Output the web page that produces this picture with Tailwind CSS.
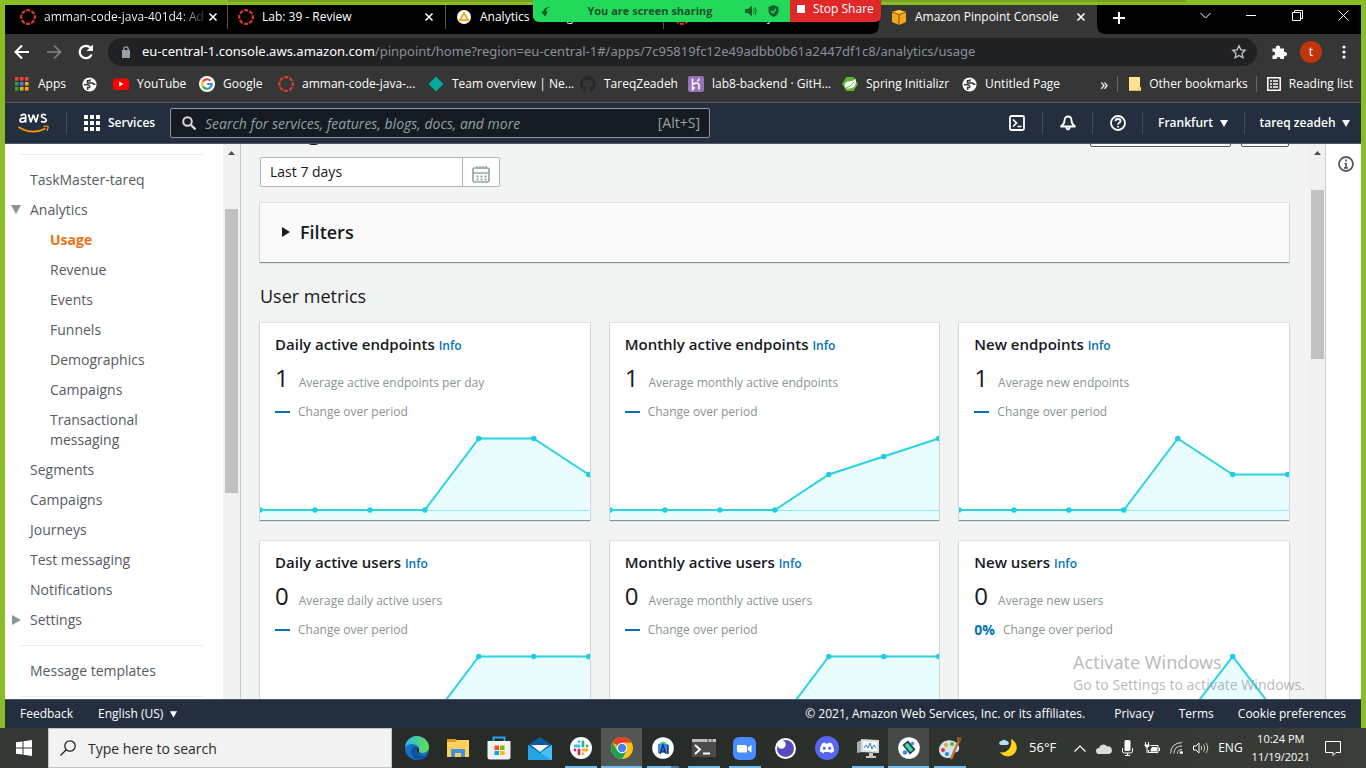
<!DOCTYPE html>
<html lang="en">
<head>
<meta charset="utf-8">
<title>Amazon Pinpoint Console</title>
<script src="https://cdn.jsdelivr.net/npm/@tailwindcss/browser@4"></script>
</head>
<body class="h-screen overflow-hidden flex flex-col bg-[#8abd25] font-['Open_Sans',sans-serif] text-[#16191f]">
<svg class="hidden">
  <symbol id="canvas" viewBox="0 0 16 16"><circle cx="8" cy="8" r="6.8" fill="none" stroke="#e03a2e" stroke-width="2.2" stroke-dasharray="4.1 1.24" stroke-dashoffset="2"/></symbol>
  <symbol id="x" viewBox="0 0 10 10"><path d="M1.500 1.500l7 7M8.500 1.500l-7 7" stroke="#fff" stroke-width="1.600"/></symbol>
  <symbol id="globe" viewBox="0 0 16 16"><circle cx="8" cy="8" r="7.500" fill="#fff"/><path d="M2 8.300h4.200q2 0 2 1.600v1.300H6v2.600" fill="none" stroke="#363636" stroke-width="1.500"/><path d="M8.500 2.300v1.600H5.800v2.500h5.500q1 0 1 1.200h2" fill="none" stroke="#363636" stroke-width="1.600"/></symbol>
  <symbol id="down" viewBox="0 0 10 8"><path d="M1 1h8L5 8z" fill="currentColor"/></symbol>
</svg>

<div class="relative flex-1 min-h-0 flex flex-col px-[5px] pt-[5px]">
  <div class="absolute top-0 left-[228px] right-[180px] h-[2px] bg-[#76a222]"></div>

  <div class="absolute z-10 top-0 left-[533px] w-[348px] h-[22px] flex rounded-b-md overflow-hidden text-xs shadow">
    <div class="w-[257px] bg-[#23d959] flex items-center px-[7px]">
      <svg class="size-[11px]" viewBox="0 0 11 11"><path d="M10 1C6 1 3.500 2.500 3.500 5.500H1l4 5 3-5H6C6 3.500 7 2 10 1z" fill="#075f22"/></svg>
      <span class="flex-1 text-center text-[11px] font-bold text-[#1c5130] pl-1">You are screen sharing</span>
      <svg class="w-[12px] h-[12px] mr-[11px]" viewBox="0 0 12 12"><path d="M0 4h3l4-3.500v11L3 8H0z" fill="#12622c"/><path d="M8.500 3.500q1.500 2.500 0 5M10 2q2.600 4 0 8" fill="none" stroke="#12622c"/></svg>
      <svg class="w-[11px] h-[12px] mr-1" viewBox="0 0 11 12"><path d="M5.500 0l5 2v4q0 4-5 6-5-2-5-6V2z" fill="#12622c"/><path d="M3 6l2 2 3-4" fill="none" stroke="#23d959" stroke-width="1.300"/></svg>
    </div>
    <button class="flex-1 bg-[#e02828] text-white flex items-center gap-2 pl-[7px] pb-1"><span class="size-2 bg-white"></span>Stop Share</button>
  </div>

  <div class="flex bg-[#363636] h-[29px] shrink-0 text-xs text-white">
    <div class="flex w-[874px] bg-black rounded-br-lg pl-[5px]">
      <div class="w-[218px] h-6 flex items-center border-r border-[#555] pl-[10px] pr-[11px] gap-2"><svg class="size-4 shrink-0"><use href="#canvas"/></svg><span class="flex-1 whitespace-nowrap bg-linear-to-r from-white from-85% to-[#333] bg-clip-text text-transparent">amman-code-java-401d4: Ad</span><button aria-label="Close tab" class="flex -ml-1"><svg class="size-[10px]"><use href="#x"/></svg></button></div>
      <div class="w-[218px] h-6 flex items-center border-r border-[#555] pl-[10px] pr-[11px] gap-2"><svg class="size-4 shrink-0"><use href="#canvas"/></svg><span class="flex-1 whitespace-nowrap">Lab: 39 - Review</span><button aria-label="Close tab" class="flex"><svg class="size-[10px]"><use href="#x"/></svg></button></div>
      <div class="w-[218px] h-6 flex items-center border-r border-[#555] pl-[10px] pr-[11px] gap-2"><svg class="size-4 shrink-0" viewBox="0 0 16 16"><circle cx="8" cy="8" r="7" fill="#fff"/><path d="M8 4l4 7H4z" fill="none" stroke="#f5a81c" stroke-width="1.800"/></svg><span class="flex-1 whitespace-nowrap">Analytics - Billing</span></div>
      <div class="flex-1 h-6 flex items-center pl-[10px] gap-2"><svg class="size-4 shrink-0"><use href="#canvas"/></svg><span class="whitespace-nowrap">Lab: 39 - Project</span></div>
    </div>
    <div class="w-[218px] h-6 flex items-center pl-[12px] pr-[11px] gap-2">
      <svg class="size-4 shrink-0" viewBox="0 0 16 16"><path d="M8 1l7 2v10l-7 3-7-3V3z" fill="#f3a61f"/><path d="M1 3l7 2.500L15 3 8 1z" fill="#ffc62e"/><path d="M8 5.500V16M1 3l7 2.500L15 3" stroke="#8c5607" fill="none"/></svg>
      <span class="flex-1 whitespace-nowrap">Amazon Pinpoint Console</span><button aria-label="Close tab" class="flex"><svg class="size-[10px]"><use href="#x"/></svg></button>
    </div>
    <div class="flex-1 bg-black rounded-bl-lg flex items-center pb-1 pl-4">
      <button aria-label="New tab"><svg class="size-3" viewBox="0 0 12 12"><path d="M6 0v12M0 6h12" stroke="#fff" stroke-width="2"/></svg></button>
      <div class="ml-auto flex gap-[35px] pr-[12px] pb-1">
        <button aria-label="Search tabs"><svg class="size-[11px]" viewBox="0 0 11 11"><path d="M.5 3l5 5 5-5" stroke="#fff" fill="none"/></svg></button>
        <button aria-label="Minimize"><svg class="size-[11px]" viewBox="0 0 11 11"><path d="M0 5.500h10" stroke="#fff"/></svg></button>
        <button aria-label="Restore"><svg class="size-[11px]" viewBox="0 0 11 11"><path d="M.5 2.500h8v8h-8zM2.500 2.500v-2h8v8h-2" stroke="#fff" fill="none"/></svg></button>
        <button aria-label="Close"><svg class="size-[11px]" viewBox="0 0 11 11"><path d="M.5.5l10 10M10.500.5l-10 10" stroke="#fff"/></svg></button>
      </div>
    </div>
  </div>

  <div class="h-9 shrink-0 bg-[#363636] flex items-center text-white pl-[9px] pr-[15px]">
    <button aria-label="Back"><svg class="size-4" viewBox="0 0 16 16"><path d="M15 8H2M8 1.500L1.500 8 8 14.500" stroke="#fff" stroke-width="2" fill="none"/></svg></button>
    <button aria-label="Forward" class="ml-4"><svg class="size-4" viewBox="0 0 16 16"><path d="M1 8h13M8 1.500L14.500 8 8 14.500" stroke="#858585" stroke-width="1.700" fill="none"/></svg></button>
    <button aria-label="Reload" class="ml-4"><svg class="size-4" viewBox="0 0 16 16"><path d="M13.600 10.500A6.200 6.200 0 1 1 12.500 3.800" stroke="#fff" stroke-width="2.200" fill="none"/><path d="M15 .5v6.500H8.500z" fill="#fff"/></svg></button>
    <div class="ml-[14px] flex-1 h-7 rounded-full bg-[#202124] flex items-center pl-[14px] pr-[10px]">
      <svg class="w-2 h-3" viewBox="0 0 8 12"><path d="M0 4h8v8H0z" fill="#9aa0a6"/><path d="M1.800 5V3a2.200 2.200 0 0 1 4.400 0v2" stroke="#9aa0a6" stroke-width="1.300" fill="none"/></svg>
      <span class="ml-3 flex-1 whitespace-nowrap text-[13px] font-['Noto_Sans',sans-serif] text-[#8b9095]"><span class="text-white">eu-central-1.console.aws.amazon.com</span>/pinpoint/home?region=eu-central-1#/apps/7c95819fc12e49adbb0b61a2447df1c8/analytics/usage</span>
      <svg class="size-4" viewBox="0 0 16 16"><path d="M8 1.800l1.900 4 4.400.5-3.300 3 .9 4.400L8 11.500l-3.900 2.200.9-4.400-3.300-3 4.400-.5z" stroke="#c5c8cb" stroke-width="1.300" fill="none"/></svg>
    </div>
    <button aria-label="Extensions" class="ml-[14px]"><svg class="size-4" viewBox="0 0 16 16"><path d="M1.500 4.500h3.500a2.200 2.200 0 1 1 4 0h4v3.500a2.200 2.200 0 1 1 0 4v3H9.500a2 2 0 1 0-4 0h-4v-3.500a2 2 0 1 0 0-3.800z" fill="#fff"/></svg></button>
    <button aria-label="Profile" class="ml-[13px] size-[22px] rounded-full bg-[#c0350c] text-xs leading-[22px]">t</button>
    <button aria-label="Menu" class="ml-[20px]"><svg class="w-1 h-[14px]" viewBox="0 0 4 14"><circle cx="2" cy="2" r="1.600" fill="#fff"/><circle cx="2" cy="7" r="1.600" fill="#fff"/><circle cx="2" cy="12" r="1.600" fill="#fff"/></svg></button>
  </div>

  <nav class="h-[33px] shrink-0 bg-[#363636] border-b border-[#5c5c5c] flex items-center text-white text-xs pl-[10px] pr-2 whitespace-nowrap pb-1">
    <a href="#" class="w-[67px] flex items-center gap-[9px]"><svg class="size-[14px]" viewBox="0 0 14 14"><path d="M0 0h3.500v3.500H0zM5 0h3.500v3.500H5zM10 0h3.500v3.500H10z" fill="#e94335"/><path d="M0 5h3.500v3.500H0zM0 10h3.500v3.500H0z" fill="#2da34f"/><path d="M5 5h3.500v3.500H5z" fill="#3b82f6"/><path d="M5 10h3.500v3.500H5zM10 5h3.500v3.500H10zM10 10h3.500v3.500H10z" fill="#f9ab10"/></svg>Apps</a>
    <a href="#" aria-label="Bookmark" class="w-[31px]"><svg class="size-[15px]"><use href="#globe"/></svg></a>
    <a href="#" class="w-[86px] flex items-center gap-2"><svg class="size-4" viewBox="0 0 16 16"><rect y="2.500" width="16" height="11.500" rx="2.500" fill="#f00"/><path d="M6.300 5.500v5l4.200-2.500z" fill="#fff"/></svg>YouTube</a>
    <a href="#" class="w-[79px] flex items-center gap-2"><svg class="size-4" viewBox="0 0 16 16"><circle cx="8" cy="8" r="8" fill="#fff"/><g fill="none" stroke-width="2.200"><path d="M11.400 4.700A4.800 4.800 0 0 0 3.800 5.700" stroke="#ea4335"/><path d="M3.800 5.700a4.800 4.800 0 0 0 0 4.600" stroke="#fbbc05"/><path d="M3.800 10.300a4.800 4.800 0 0 0 7.300 1.300" stroke="#34a853"/><path d="M11.100 11.600A4.800 4.800 0 0 0 12.800 8H8.200" stroke="#4285f4"/></g></svg>Google</a>
    <a href="#" class="w-[150px] flex items-center gap-2"><svg class="size-4"><use href="#canvas"/></svg>amman-code-java-...</a>
    <a href="#" class="w-[152px] flex items-center gap-2"><svg class="size-4 shrink-0" viewBox="0 0 16 16"><path d="M8 .5L15.500 8 8 15.500.5 8z" fill="#00a99d"/></svg>Team overview | Ne...</a>
    <a href="#" class="w-[108px] flex items-center gap-2"><svg class="size-4" viewBox="0 0 16 16"><path d="M8 0a8 8 0 0 0-2.500 15.600c.4 0 .5-.2.500-.4v-1.500c-2.200.5-2.700-1-2.700-1-.4-.9-.9-1.200-.9-1.200-.7-.5.1-.5.1-.5.800.1 1.200.8 1.200.8.700 1.300 1.900.9 2.300.7.100-.5.300-.9.500-1.100-1.800-.2-3.600-.9-3.600-4 0-.9.300-1.600.8-2.100-.1-.2-.4-1 .1-2.100 0 0 .7-.2 2.200.8a7.500 7.500 0 0 1 4 0c1.500-1 2.200-.8 2.200-.8.500 1.100.2 1.900.1 2.100.5.500.8 1.200.8 2.100 0 3.100-1.800 3.700-3.600 4 .3.200.6.700.6 1.500v2.200c0 .2.100.5.500.4A8 8 0 0 0 8 0z" fill="#24292e"/></svg>TareqZeadeh</a>
    <a href="#" class="w-[154px] flex items-center gap-2"><svg class="size-4" viewBox="0 0 16 16"><rect width="16" height="16" rx="2" fill="#9673b9"/><path d="M4.500 2.500v6Q11 5.500 11 9v4.500M11 2.500q0 1.500-1.500 3M4.500 10.500v3l1.700-1.500z" stroke="#fff" stroke-width="1.500" fill="none"/></svg>lab8-backend · GitH...</a>
    <a href="#" class="w-[120px] flex items-center gap-2"><svg class="size-4" viewBox="0 0 16 16"><path d="M4.500 1h7L16 8l-4.500 7h-7L0 8z" fill="#5fb832"/><path d="M13.500 2.500C15 9 12 13 7 12.500c-2 0-3.500-.5-4-1C2 6 5 5.500 9 5c2-.3 3.500-1 4.500-2.500z" fill="#fff"/><path d="M3.500 12Q9 11 12 6" stroke="#5fb832" fill="none"/></svg>Spring Initializr</a>
    <a href="#" class="flex items-center gap-2"><svg class="size-[15px]"><use href="#globe"/></svg>Untitled Page</a>
    <button class="ml-auto text-base leading-4 pr-[9px]">»</button>
    <a href="#" class="flex items-center gap-2 border-l border-[#666] pl-[11px] pr-2"><svg class="w-3 h-[14px]" viewBox="0 0 12 14"><path d="M0 0h11v10h1v4H0z" fill="#ffe391"/><path d="M0 13.500h12M10 10v3" stroke="#e6b84a"/></svg>Other bookmarks</a>
    <a href="#" class="flex items-center gap-2 border-l border-[#666] pl-[10px]"><svg class="size-[14px]" viewBox="0 0 14 14"><path d="M.8.8h12.400v12.400H.8z" fill="none" stroke="#fff" stroke-width="1.500"/><path d="M3 4h2M6 4h5M3 7h2M6 7h5M3 10h2M6 10h5" stroke="#fff" stroke-width="1.500"/></svg>Reading list</a>
  </nav>

  <header class="h-10 shrink-0 bg-[#232f3e] flex items-center text-white text-xs font-semibold">
    <a href="#" aria-label="AWS" class="ml-[13px]"><svg class="w-[31px] h-5" viewBox="0 0 31 20"><g fill="none" stroke="#fff" stroke-width="1.700"><path d="M2.500 2.700Q7.700-.2 7.700 3.500V9.500M7.700 5.200Q2 4.500 2 7.300 2 9 4 9q3 0 3.700-2.600"/><path d="M10.500 1.200l2.300 8 2.600-7.400 2.600 7.400 2.300-8" stroke-linejoin="bevel"/><path d="M28 2Q23.500.5 23.500 3.200c0 2.200 4.800 1.300 4.800 3.800 0 2.600-4 2.200-5.300 1.300"/></g><path d="M.5 14q13.500 8.500 27 1.500" fill="none" stroke="#f90" stroke-width="1.800"/><path d="M25.500 13.500q4-1 4.500 0t-1 4.200" fill="none" stroke="#f90" stroke-width="1.300"/></svg></a>
    <span class="ml-[17px] w-px h-[22px] bg-[#414c5a]"></span>
    <button class="ml-[17px] w-[70px] flex items-center gap-2"><svg class="size-4 shrink-0" viewBox="0 0 16 16"><path d="M0 0h4v4H0zM6 0h4v4H6zM12 0h4v4h-4zM0 6h4v4H0zM6 6h4v4H6zM12 6h4v4h-4zM0 12h4v4H0zM6 12h4v4H6zM12 12h4v4h-4z" fill="#fff"/></svg>Services</button>
    <label class="ml-4 w-[540px] h-[30px] rounded-[2px] border border-[#8d99a5] bg-[#161a22] flex items-center pl-[11px] pr-[9px] text-sm font-normal text-[#95a5a6]">
      <svg class="size-[14px] shrink-0" viewBox="0 0 14 14"><circle cx="5.500" cy="5.500" r="4.300" fill="none" stroke="#d5dbdb" stroke-width="2"/><path d="M9 9l4.500 4.500" stroke="#d5dbdb" stroke-width="2.300"/></svg>
      <input type="text" aria-label="Search" placeholder="Search for services, features, blogs, docs, and more" class="pl-[9px] h-full flex-1 min-w-0 bg-transparent italic placeholder:text-[#8fa3a5] outline-none"><span>[Alt+S]</span>
    </label>
    <div class="ml-auto flex items-center h-[22px]">
      <button aria-label="CloudShell" class="w-[50px] flex justify-center"><svg class="size-4" viewBox="0 0 16 16"><rect x="1" y="1" width="14" height="14" rx="1.500" fill="none" stroke="#fff" stroke-width="1.800"/><path d="M4 4.500l3.500 3.500L4 11.500M8.500 11.500h4" fill="none" stroke="#fff" stroke-width="1.700"/></svg></button>
      <button aria-label="Notifications" class="w-[50px] flex items-center justify-center h-full border-l border-[#414c5a]"><svg class="size-4" viewBox="0 0 16 16"><path d="M1 11.500Q4.500 9 4.500 5.500C4.500 3 6 1.500 8 1.500S11.500 3 11.500 5.500q0 3.500 3.500 6zM6.300 12q.2 2.500 1.700 2.500T9.700 12" fill="none" stroke="#fff" stroke-width="1.800" stroke-linejoin="round"/></svg></button>
      <button aria-label="Help" class="w-[50px] flex items-center justify-center h-full border-l border-[#414c5a]"><svg class="size-4" viewBox="0 0 16 16"><circle cx="8" cy="8" r="7" fill="none" stroke="#fff" stroke-width="1.800"/><path d="M5.500 6.300Q5.500 4 8 4t2.500 2q0 1-1.300 1.800Q8 8.500 8 9.800M8 11v1.600" fill="none" stroke="#fff" stroke-width="1.800"/></svg></button>
      <button class="w-[102px] h-full border-l border-[#414c5a] flex items-center justify-center gap-[6px]">Frankfurt<svg class="w-[10px] h-[8px]"><use href="#down"/></svg></button>
      <button class="w-[117px] pl-1 h-full border-l border-[#414c5a] flex items-center justify-center gap-[5px]">tareq zeadeh<svg class="w-[10px] h-[8px]"><use href="#down"/></svg></button>
    </div>
  </header>

  <div class="flex-1 min-h-0 flex bg-white border-t border-[#4b5766] overflow-hidden">
    <aside class="w-[218px] shrink-0 overflow-hidden text-sm leading-5 text-[#545b64] pt-[10px]">
      <ul class="mx-[15px] mr-5 border-t border-[#eaeded] pt-[15px] pl-[10px] pb-[15px] space-y-[10px]">
        <li><a href="#">TaskMaster-tareq</a></li>
        <li class="relative"><svg class="absolute -left-[20px] top-[5px] w-[12px] h-[9px] text-[#879596]" viewBox="0 0 12 9"><path d="M1 0h10L6 9z" fill="currentColor"/></svg><a href="#">Analytics</a>
          <ul class="pl-5 pt-[10px] space-y-[10px]">
            <li><a href="#" class="font-bold text-[#ec7211]">Usage</a></li><li><a href="#">Revenue</a></li><li><a href="#">Events</a></li><li><a href="#">Funnels</a></li><li><a href="#">Demographics</a></li><li><a href="#">Campaigns</a></li><li><a href="#">Transactional<br>messaging</a></li>
          </ul></li>
        <li><a href="#">Segments</a></li><li><a href="#">Campaigns</a></li><li><a href="#">Journeys</a></li><li><a href="#">Test messaging</a></li><li><a href="#">Notifications</a></li>
        <li class="relative"><svg class="absolute -left-[18px] top-[5px] w-[9px] h-[10px]" viewBox="0 0 9 10"><path d="M0 0l9 5-9 5z" fill="#879596"/></svg><a href="#">Settings</a></li>
      </ul>
      <div class="mx-[15px] mr-5 border-y border-[#eaeded] py-[15px] pl-[10px]"><a href="#">Message templates</a></div>
    </aside>
    <div class="w-[17px] shrink-0 bg-[#f1f1f1] flex flex-col items-center"><svg class="mt-[7px] w-[7px] h-1" viewBox="0 0 7 4"><path d="M0 4l3.500-4L7 4z" fill="#505050"/></svg><div class="mt-[54px] w-[13px] h-[284px] bg-[#c1c1c1]"></div></div>

    <main class="flex-1 min-w-0 border-l border-[#c8ccce] bg-[#f2f3f3] overflow-hidden px-[19px] pr-[21px]">
      <div class="-mt-[28px] h-[31px] flex items-end justify-between">
        <h1 class="text-[26px] leading-[36px] font-semibold">Usage</h1>
        <div class="flex gap-[10px]"><button aria-label="Export" class="w-[141px] h-7 rounded-[2px] border border-[#545b64] bg-white"></button><button aria-label="Settings" class="w-12 h-7 rounded-[2px] border border-[#545b64] bg-white"></button></div>
      </div>
      <div class="mt-[10px] flex w-[240px] h-[30px] bg-white border border-[#aab7b8] rounded-[2px]"><input aria-label="Date range" value="Last 7 days" class="flex-1 min-w-0 px-[9px] text-sm outline-none"><button aria-label="Pick dates" class="w-[37px] border-l border-[#aab7b8] flex items-center justify-center pt-1"><svg class="w-[18px] h-[17px]" viewBox="0 0 18 17"><rect x="1" y="2" width="16" height="14" rx="1.500" fill="none" stroke="#95a5a6" stroke-width="1.700"/><path d="M1 7h16M5 0v3M8 0v3M11 0v3M14 0v3" stroke="#95a5a6" stroke-width="1.500"/><path d="M4.500 10.500h10M4.500 13.500h10" stroke="#95a5a6" stroke-width="1.800" stroke-dasharray="2 2"/></svg></button></div>
      <button class="mt-4 w-full h-[59px] bg-[#fafafa] shadow-[0_1px_1px_#879596,0_0_0_1px_#dfe3e3] flex items-center gap-[10px] pl-[22px] text-lg font-semibold pb-[2px]"><svg class="w-2 h-[10px]" viewBox="0 0 8 10"><path d="M0 0l8 5-8 5z" fill="#16191f"/></svg>Filters</button>
      <h2 class="mt-[22px] text-lg leading-6">User metrics</h2>
      <div class="mt-[15px] grid grid-cols-3 gap-x-[20px] gap-y-[21px]">

        <section class="h-[197px] bg-white shadow-[0_1px_1px_#879596,0_0_0_1px_#dfe3e3] flex flex-col">
          <div class="px-[15px] pt-[11px]">
            <h3 class="text-[15px] leading-5 font-semibold">Daily active endpoints <a href="#" class="text-xs font-semibold text-[#0073bb]">Info</a></h3>
            <p class="mt-[8px] h-8 leading-8 text-xs text-[#879596]"><span class="text-2xl leading-8 text-[#16191f] mr-[10px]">1</span>Average active endpoints per day</p>
            <p class="mt-[10px] h-4 flex items-center gap-2 text-xs text-[#879596]"><span class="w-[15px] h-[2px] bg-[#0073bb]"></span>Change over period</p>
          </div>
          <svg class="mt-auto w-full h-[90px]" viewBox="0 0 330 90" preserveAspectRatio="none"><path d="M0 80H165L219 8.500H274L330 44.500V90H0z" fill="#e9fcfe"/><path d="M0 80.500H330" stroke="#8de8ef"/><path d="M0 80H165L219 8.500H274L329 44.500" fill="none" stroke="#29d3e2" stroke-width="2"/><path d="M0 80h0M55 80h0M110 80h0M165 80h0M219 8.500h0M274 8.500h0M329 44.500h0" stroke="#1fcfe0" stroke-width="5.500" stroke-linecap="round"/></svg>
        </section>

        <section class="h-[197px] bg-white shadow-[0_1px_1px_#879596,0_0_0_1px_#dfe3e3] flex flex-col">
          <div class="px-[15px] pt-[11px]">
            <h3 class="text-[15px] leading-5 font-semibold">Monthly active endpoints <a href="#" class="text-xs font-semibold text-[#0073bb]">Info</a></h3>
            <p class="mt-[8px] h-8 leading-8 text-xs text-[#879596]"><span class="text-2xl leading-8 text-[#16191f] mr-[10px]">1</span>Average monthly active endpoints</p>
            <p class="mt-[10px] h-4 flex items-center gap-2 text-xs text-[#879596]"><span class="w-[15px] h-[2px] bg-[#0073bb]"></span>Change over period</p>
          </div>
          <svg class="mt-auto w-full h-[90px]" viewBox="0 0 330 90" preserveAspectRatio="none"><path d="M0 80H165L219 44.500L274 26.500L330 8.500V90H0z" fill="#e9fcfe"/><path d="M0 80.500H330" stroke="#8de8ef"/><path d="M0 80H165L219 44.500L274 26.500L329 8.500" fill="none" stroke="#29d3e2" stroke-width="2"/><path d="M0 80h0M55 80h0M110 80h0M165 80h0M219 44.500h0M274 26.500h0M329 8.500h0" stroke="#1fcfe0" stroke-width="5.500" stroke-linecap="round"/></svg>
        </section>

        <section class="h-[197px] bg-white shadow-[0_1px_1px_#879596,0_0_0_1px_#dfe3e3] flex flex-col">
          <div class="px-[15px] pt-[11px]">
            <h3 class="text-[15px] leading-5 font-semibold">New endpoints <a href="#" class="text-xs font-semibold text-[#0073bb]">Info</a></h3>
            <p class="mt-[8px] h-8 leading-8 text-xs text-[#879596]"><span class="text-2xl leading-8 text-[#16191f] mr-[10px]">1</span>Average new endpoints</p>
            <p class="mt-[10px] h-4 flex items-center gap-2 text-xs text-[#879596]"><span class="w-[15px] h-[2px] bg-[#0073bb]"></span>Change over period</p>
          </div>
          <svg class="mt-auto w-full h-[90px]" viewBox="0 0 330 90" preserveAspectRatio="none"><path d="M0 80H165L219 8.500L274 44.500H330V90H0z" fill="#e9fcfe"/><path d="M0 80.500H330" stroke="#8de8ef"/><path d="M0 80H165L219 8.500L274 44.500H329" fill="none" stroke="#29d3e2" stroke-width="2"/><path d="M0 80h0M55 80h0M110 80h0M165 80h0M219 8.500h0M274 44.500h0M329 44.500h0" stroke="#1fcfe0" stroke-width="5.500" stroke-linecap="round"/></svg>
        </section>

        <section class="h-[197px] bg-white shadow-[0_1px_1px_#879596,0_0_0_1px_#dfe3e3] flex flex-col">
          <div class="px-[15px] pt-[11px]">
            <h3 class="text-[15px] leading-5 font-semibold">Daily active users <a href="#" class="text-xs font-semibold text-[#0073bb]">Info</a></h3>
            <p class="mt-[8px] h-8 leading-8 text-xs text-[#879596]"><span class="text-2xl leading-8 text-[#16191f] mr-[10px]">0</span>Average daily active users</p>
            <p class="mt-[10px] h-4 flex items-center gap-2 text-xs text-[#879596]"><span class="w-[15px] h-[2px] bg-[#0073bb]"></span>Change over period</p>
          </div>
          <svg class="mt-auto w-full h-[90px]" viewBox="0 0 330 90" preserveAspectRatio="none"><path d="M0 80H165L219 8.500H330V90H0z" fill="#e9fcfe"/><path d="M0 80H165L219 8.500H329" fill="none" stroke="#29d3e2" stroke-width="2"/><path d="M165 80h0M219 8.500h0M274 8.500h0M329 8.500h0" stroke="#1fcfe0" stroke-width="5.500" stroke-linecap="round"/></svg>
        </section>

        <section class="h-[197px] bg-white shadow-[0_1px_1px_#879596,0_0_0_1px_#dfe3e3] flex flex-col">
          <div class="px-[15px] pt-[11px]">
            <h3 class="text-[15px] leading-5 font-semibold">Monthly active users <a href="#" class="text-xs font-semibold text-[#0073bb]">Info</a></h3>
            <p class="mt-[8px] h-8 leading-8 text-xs text-[#879596]"><span class="text-2xl leading-8 text-[#16191f] mr-[10px]">0</span>Average monthly active users</p>
            <p class="mt-[10px] h-4 flex items-center gap-2 text-xs text-[#879596]"><span class="w-[15px] h-[2px] bg-[#0073bb]"></span>Change over period</p>
          </div>
          <svg class="mt-auto w-full h-[90px]" viewBox="0 0 330 90" preserveAspectRatio="none"><path d="M0 80H165L219 8.500H330V90H0z" fill="#e9fcfe"/><path d="M0 80H165L219 8.500H329" fill="none" stroke="#29d3e2" stroke-width="2"/><path d="M165 80h0M219 8.500h0M274 8.500h0M329 8.500h0" stroke="#1fcfe0" stroke-width="5.500" stroke-linecap="round"/></svg>
        </section>

        <section class="h-[197px] bg-white shadow-[0_1px_1px_#879596,0_0_0_1px_#dfe3e3] flex flex-col">
          <div class="px-[15px] pt-[11px]">
            <h3 class="text-[15px] leading-5 font-semibold">New users <a href="#" class="text-xs font-semibold text-[#0073bb]">Info</a></h3>
            <p class="mt-[8px] h-8 leading-8 text-xs text-[#879596]"><span class="text-2xl leading-8 text-[#16191f] mr-[10px]">0</span>Average new users</p>
            <p class="mt-[10px] h-4 flex items-center gap-2 text-xs text-[#879596]"><span class="text-sm font-bold text-[#0073bb]">0%</span>Change over period</p>
          </div>
          <svg class="mt-auto w-full h-[90px]" viewBox="0 0 330 90" preserveAspectRatio="none"><path d="M0 80H219L274 8.500L329 80V90H0z" fill="#e9fcfe"/><path d="M0 80H219L274 8.500L329 80" fill="none" stroke="#29d3e2" stroke-width="2"/><path d="M219 80h0M274 8.500h0M329 80h0" stroke="#1fcfe0" stroke-width="5.500" stroke-linecap="round"/></svg>
        </section>
      </div>
    </main>
    <div class="w-[15px] shrink-0 bg-[#f1f1f1] flex flex-col items-center"><svg class="mt-[7px] w-[7px] h-1" viewBox="0 0 7 4"><path d="M0 4l3.500-4L7 4z" fill="#505050"/></svg><div class="mt-[35px] w-[13px] h-[169px] bg-[#c1c1c1]"></div></div>
    <div class="w-9 shrink-0 border-l border-[#c8ccce] flex justify-center pt-[12px] pl-[5px]"><button aria-label="Info panel" class="size-4"><svg class="size-4" viewBox="0 0 16 16"><circle cx="8" cy="8" r="7" fill="none" stroke="#545b64" stroke-width="1.800"/><path d="M8 3.500v2M6.500 7.500H8v4M6 11.800h4" fill="none" stroke="#545b64" stroke-width="1.700"/></svg></button></div>
  </div>

  <footer class="h-[29px] shrink-0 bg-[#232f3e] border-t border-[#4b5766] text-white text-xs font-medium flex items-center px-[15px]">
    <a href="#">Feedback</a><button class="ml-[25px] flex items-center gap-[6px]">English (US)<svg class="w-[9px] h-[8px]"><use href="#down"/></svg></button>
    <span class="ml-auto">© 2021, Amazon Web Services, Inc. or its affiliates.</span><a href="#" class="ml-[29px]">Privacy</a><a href="#" class="ml-[25px]">Terms</a><a href="#" class="ml-[24px]">Cookie preferences</a>
  </footer>

  <div class="absolute left-[1073px] top-[650px] whitespace-nowrap text-[#8d8d8d]/60 font-['Noto_Sans',sans-serif] pointer-events-none"><p class="text-lg leading-6">Activate Windows</p><p class="text-sm leading-[22px]">Go to Settings to activate Windows.</p></div>
</div>

<div class="h-10 shrink-0 bg-linear-to-r from-[#272b28] via-[#272c28] to-[#3b3e38] flex items-center text-white">
  <button aria-label="Start" class="w-12 h-full bg-[#333834] flex items-center justify-center"><svg class="size-4" viewBox="0 0 16 16"><path d="M0 2.300L6.500 1.400V7.500H0zM7.500 1.200L16 0v7.500H7.500zM0 8.500h6.500v6.100L0 13.700zM7.500 8.500H16V16l-8.500-1.200z" fill="#fff"/></svg></button>
  <label class="w-[344px] h-full bg-[#f2f2f2] border border-[#c3c3c3] flex items-center pl-[11px] gap-3 text-sm text-[#2b2b2b]"><svg class="size-4 shrink-0" viewBox="0 0 16 16"><circle cx="10" cy="6" r="5.200" fill="none" stroke="#222" stroke-width="1.300"/><path d="M6.200 9.800L.5 15.500" stroke="#222" stroke-width="1.300"/></svg><input type="text" aria-label="Windows search" placeholder="Type here to search" class="flex-1 h-full min-w-0 placeholder:text-[#2b2b2b] outline-none"></label>
  <div class="ml-1 flex h-full">
    <button aria-label="Edge" class="w-[41px] flex items-center justify-center"><svg class="size-6" viewBox="0 0 24 24"><defs><linearGradient id="eg"><stop stop-color="#2fb5ea"/><stop offset="1" stop-color="#62e04d"/></linearGradient></defs><circle cx="12" cy="12" r="12" fill="#1470c4"/><path d="M0 11C1 4 6 0 12 0s12 5 12 11c0 4-4 6-7 6s-4-1-3-3c1-5-8-9-14-3z" fill="url(#eg)"/><path d="M8 11c-4 5-1 12 5 13 4 0 8-2 10-5-5 2-12 1-12-5 0-2 1-3 2-3-1-1-4-1-5 0z" fill="#0f4f9e"/><path d="M14 14c-1 3 2 4.500 5 4.300l4-1.500c-5 3-12 1-11.500-3.300 0-1.500 1-2 2-1.800.7.400.9 1.300.5 2.300z" fill="#272b28"/></svg></button>
    <button aria-label="File Explorer" class="w-[41px] flex items-center justify-center"><svg class="w-[22px] h-[18px]" viewBox="0 0 22 18"><path d="M0 0h9l1 2v3H0z" fill="#e09a0b"/><path d="M0 3h8l2-2h12v17H0z" fill="#ffd05c"/><path d="M4 18v-8h14v8h-4v-4H8v4z" fill="#3f92da"/></svg></button>
    <button aria-label="Store" class="w-[41px] flex items-center justify-center"><svg class="size-6" viewBox="0 0 24 24"><path d="M6.500 6V1.500h11V6" fill="none" stroke="#20a5ee" stroke-width="2"/><path d="M.5 5h23v16q0 2.500-2.500 2.500H3Q.5 23.500.5 21z" fill="#f1f1f1"/><path d="M7.500 9.500H12V14H7.500z" fill="#f2501e"/><path d="M13 9.500h4.500V14H13z" fill="#7fba00"/><path d="M7.500 15H12v4H7.500z" fill="#04a3ef"/><path d="M13 15h4.500v4H13z" fill="#ffb900"/></svg></button>
    <button aria-label="Mail" class="w-[41px] flex items-center justify-center"><svg class="w-6 h-[23px]" viewBox="0 0 24 23"><path d="M0 8l12-8 12 8v7H0z" fill="#0c59a4"/><path d="M3 8h18l-9 7z" fill="#f4f4f4"/><path d="M0 8l12 8 12-8v15H0z" fill="#27a4e4"/><path d="M24 8v15L12 16z" fill="#46c1f3"/></svg></button>
    <button aria-label="Slack" class="relative w-[41px] flex items-center justify-center"><svg class="size-[22px]" viewBox="0 0 22 22"><circle cx="11" cy="11" r="11" fill="#fff"/><g stroke-width="2.800" stroke-linecap="round"><path d="M9 4.700v0M5 9h4.300" stroke="#36c5f0"/><path d="M13 5v4M17 9h0" stroke="#2eb67d"/><path d="M13 13h4M13 17h0" stroke="#ecb22e"/><path d="M9 13v4M5 13h0" stroke="#e01e5a"/></g></svg><span class="absolute bottom-0 w-8 h-[2px] bg-[#76b9ed]"></span></button>
    <button aria-label="Chrome" class="relative w-[41px] bg-[#535753] flex items-center justify-center border-b-2 border-[#76b9ed] pt-[2px]"><svg class="size-[22px]" viewBox="0 0 22 22"><circle cx="11" cy="11" r="11" fill="#fbc116"/><path d="M11 11L1.500 5.500A11 11 0 0 1 20.500 5.500H11z" fill="#e33b2e"/><path d="M1.500 5.500A11 11 0 0 0 11 22l4.800-8.300L6.200 13.700z" fill="#1da05a"/><circle cx="11" cy="11" r="5.200" fill="#fff"/><circle cx="11" cy="11" r="4.200" fill="#4285f4"/></svg></button>
    <button aria-label="Android Studio" class="relative w-[41px] flex items-center justify-center"><svg class="size-[22px]" viewBox="0 0 22 22"><circle cx="11" cy="11" r="10.800" fill="#fff"/><path d="M7 7q4-5 8 0z" fill="#3ddc84"/><path d="M6 7h10v9H6z" fill="#4285f4"/><path d="M8 17l3-9 3 9M9 14h4M16 8v9" stroke="#163a66" stroke-width="1.500" fill="none"/></svg><span class="absolute bottom-0 w-8 h-[2px] bg-[#76b9ed] border-r-8 border-[#4d7ba0]"></span></button>
    <button aria-label="Terminal" class="relative w-[41px] flex items-center justify-center"><svg class="w-6 h-[18px]" viewBox="0 0 24 18"><path d="M0 0h24v18H0z" fill="#4b4b4b"/><path d="M0 0h24v3H0z" fill="#bdbdbd"/><path d="M16 0v3M20 0v3" stroke="#555"/><path d="M3 6l5 4.500L3 15M11 14.500h7" fill="none" stroke="#fff" stroke-width="2"/></svg><span class="absolute bottom-0 w-8 h-[2px] bg-[#76b9ed]"></span></button>
    <button aria-label="Zoom" class="relative w-[41px] flex items-center justify-center"><svg class="size-[23px]" viewBox="0 0 23 23"><rect width="23" height="23" rx="6" fill="#4a8cff"/><path d="M4 8h8q2 0 2 2v5.500H6q-2 0-2-2zM15 10.500L18.500 8v7.500L15 13z" fill="#fff"/></svg><span class="absolute bottom-0 w-8 h-[2px] bg-[#76b9ed]"></span></button>
    <button aria-label="Insomnia" class="w-[41px] flex items-center justify-center"><svg class="size-[21px]" viewBox="0 0 21 21"><circle cx="10.500" cy="10.500" r="10.500" fill="#fff"/><circle cx="10.500" cy="10.500" r="8.500" fill="#5849be"/><circle cx="6.500" cy="6.500" r="4.200" fill="#fff"/></svg></button>
    <button aria-label="Discord" class="w-[41px] flex items-center justify-center"><svg class="size-6" viewBox="0 0 24 24"><circle cx="12" cy="12" r="12" fill="#5865f2"/><path d="M7 7.500l3-1 .6 1h2.800l.6-1 3 1q2.300 4 2 8l-3.500 1.700-1-1.500q-2.500.5-5 0l-1 1.500L5 15.500q-.3-4 2-8z" fill="#fff"/><circle cx="9.300" cy="12.300" r="1.500" fill="#5865f2"/><circle cx="14.700" cy="12.300" r="1.500" fill="#5865f2"/></svg></button>
    <button aria-label="System monitor" class="relative w-[41px] flex items-center justify-center"><svg class="size-[22px]" viewBox="0 0 22 22"><path d="M0 5l5-2v12l-5 1z" fill="#a9b0b0"/><path d="M4 2l18 1v13L4 15z" fill="#d7dcdd"/><path d="M6 4l14 1v9L6 13z" fill="#f7fbfd"/><path d="M7 11l2-3 2 3 2-5 2 6 2-4 2 3" fill="none" stroke="#2b7fc0"/><path d="M12 16h4v3h3v2H9v-2h3z" fill="#c3c8c8"/></svg><span class="absolute bottom-0 w-8 h-[2px] bg-[#76b9ed]"></span></button>
    <button aria-label="Emulator" class="relative w-[41px] bg-[#464a46] flex items-center justify-center border-b-2 border-[#76b9ed] pt-[2px]"><svg class="size-[22px]" viewBox="0 0 22 22"><circle cx="11" cy="11" r="10.800" fill="#fff"/><path d="M4.500 8L10 3.500l7.500 9-5.500 5z" fill="#1c3540"/><path d="M6.500 8.300l3-2.500 5.800 7-3 2.500z" fill="#3ddc9a"/><circle cx="14.500" cy="6.500" r="1.800" fill="#4285f4"/><circle cx="7" cy="15.500" r="2.200" fill="#4285f4"/></svg></button>
    <button aria-label="Paint" class="relative w-[41px] flex items-center justify-center"><svg class="size-6" viewBox="0 0 24 24"><path d="M1 14C1 8 7 3.500 13 4.500s9 5 8 9-5 2-6 4 0 4-4 4.500S1 20 1 14z" fill="#cfe4f0"/><circle cx="5" cy="14" r="2" fill="#d8382d"/><circle cx="8" cy="9" r="2" fill="#f0a21d"/><circle cx="14" cy="8" r="2" fill="#63b13c"/><circle cx="9" cy="18" r="2" fill="#2f7ed0"/><path d="M21 4l-8 19" stroke="#c77a2d" stroke-width="2.500"/><path d="M19 1l5 .5-2 5-3-1z" fill="#8a5a2f"/></svg><span class="absolute bottom-0 w-8 h-[2px] bg-[#76b9ed]"></span></button>
  </div>
  <div class="ml-auto flex items-center h-full pr-[25px]">
    <svg class="size-5" viewBox="0 0 20 20"><path d="M12 1a9 9 0 1 1-11 13c5 2 13-3 11-13z" fill="#ffd21c"/><path d="M2 7a2 2 0 0 1 .5-4 3 3 0 0 1 5 0A2 2 0 0 1 8 7z" fill="#b9dcf2"/></svg>
    <span class="ml-[10px] text-[13px]">56°F</span>
    <svg class="ml-[18px] w-3 h-[7px]" viewBox="0 0 12 7"><path d="M.5 6.500L6 1l5.500 5.500" fill="none" stroke="#fff" stroke-width="1.200"/></svg>
    <svg class="ml-[10px] w-4 h-[11px]" viewBox="0 0 16 11"><path d="M3 11a3 3 0 0 1 0-6 4.500 4.500 0 0 1 8-1.500A3.800 3.800 0 0 1 13 11z" fill="#dcdcdc"/></svg>
    <svg class="ml-[10px] w-[11px] h-4" viewBox="0 0 11 16"><rect x="2.500" width="6" height="11" rx="1.500" fill="#fff"/><path d="M.5 8v3q0 2 2 2h6q2 0 2-2V8M5.500 13v3M3 15.500h5" fill="none" stroke="#fff"/></svg>
    <svg class="ml-[11px] w-4 h-3" viewBox="0 0 16 12"><path d="M6.500 3.500h7.500v7H4.500V8M14.500 6h1v3" fill="none" stroke="#fff"/><path d="M8 5h5v4.500H6.500V8z" fill="#fff"/><path d="M1.500 0v3M4.500 0v3M3 5v6" stroke="#fff"/><path d="M.5 2.500h5q0 3-2.500 3t-2.500-3z" fill="#fff"/></svg>
    <svg class="ml-[10px] w-[14px] h-3" viewBox="0 0 14 12"><g fill="none" stroke="#ddd"><path d="M.5 11.500Q1 1 12 .5M4 11.500Q4 4 12 4M7.500 11.500Q7.500 7.500 12 7.500"/></g><circle cx="11.300" cy="10.500" r="1.500" fill="#fff"/></svg>
    <svg class="ml-[9px] w-4 h-3" viewBox="0 0 16 12"><path d="M.5 4h2.500l3-3v10L3 8H.5z" fill="none" stroke="#fff"/><path d="M8 4q1.500 2 0 4M10.500 2.500q2.500 3.500 0 7M13 1q3.500 5 0 10" fill="none" stroke="#ccc"/></svg>
    <span class="ml-[9px] text-xs">ENG</span>
    <div class="ml-[9px] text-[11px] leading-[18px] text-center">10:24 PM<br>11/19/2021</div>
    <svg class="ml-[15px] w-4 h-[15px]" viewBox="0 0 16 15"><path d="M.5.5h15v11h-4.500L8 14.500V11.500H.5z" fill="none" stroke="#fff"/></svg>
  </div>
</div>
</body>
</html>
